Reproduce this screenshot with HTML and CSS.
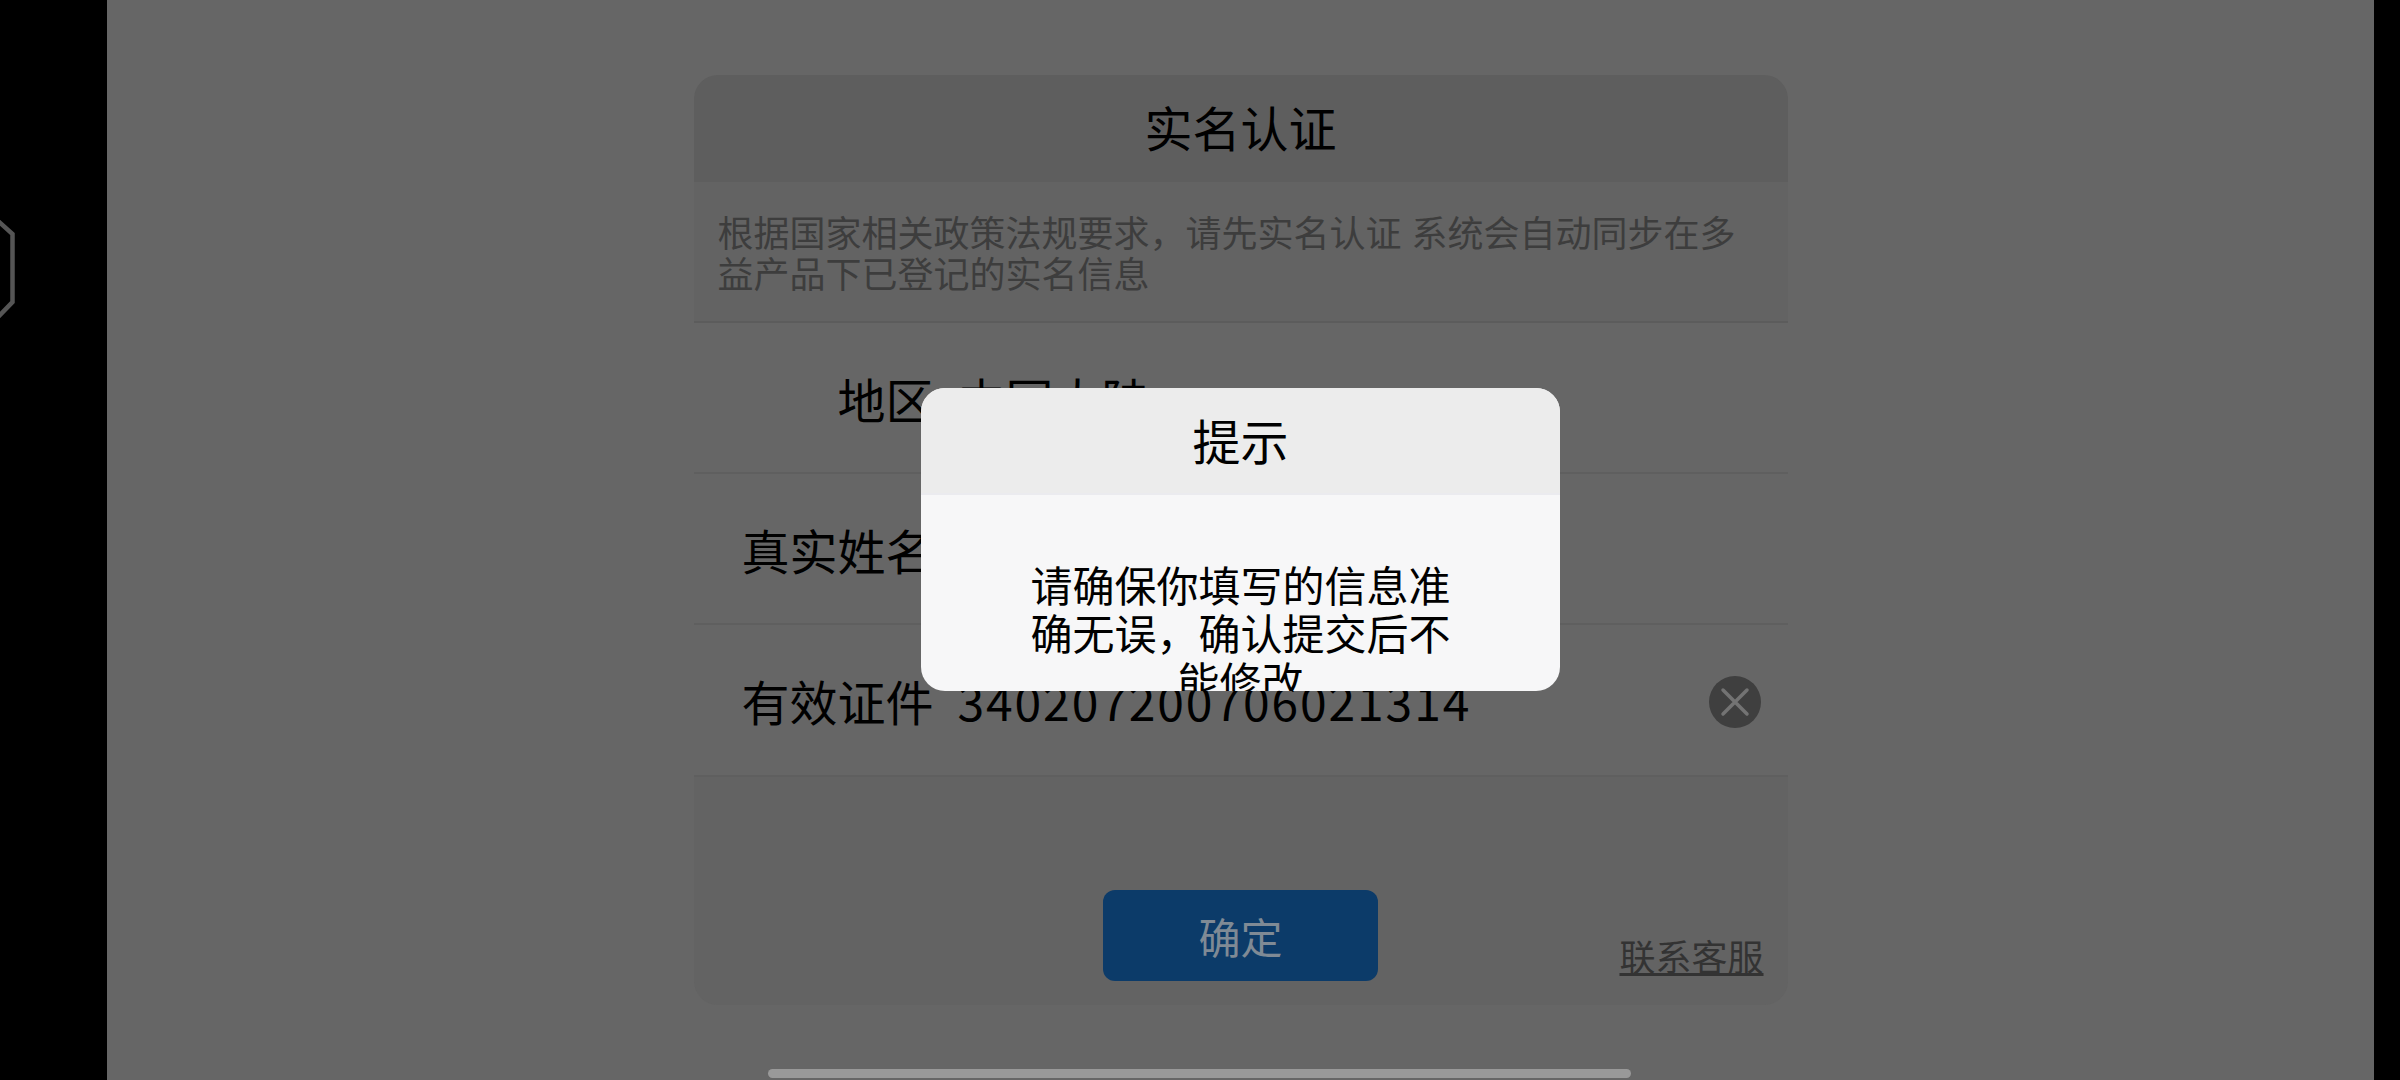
FILE: index.html
```html
<!DOCTYPE html>
<html>
    <head>
        <meta charset="utf-8" />
        <title>实名认证</title>
        <link rel="stylesheet" href="styles.css">
    </head>
    <body>
        <div class="screen">
            <div class="side_left">
                <svg class="side_handle" width="16" height="100" viewBox="0 0 16 100">
                    <path d="M-2 1 L12.5 14 V82 L-2 97" fill="none" stroke="#555" stroke-width="4.5"/>
                </svg>
            </div>
            <div class="stage">
                <div class="card">
                    <h3 class="card_title">实名认证</h3>
                    <p class="guide_txt">根据国家相关政策法规要求，请先实名认证 系统会自动同步在多益产品下已登记的实名信息</p>
                    <div class="row">
                        <span class="row_label">地区</span>
                        <span class="row_value">中国大陆</span>
                    </div>
                    <div class="row">
                        <span class="row_label">真实姓名</span>
                    </div>
                    <div class="row">
                        <span class="row_label">有效证件</span>
                        <span class="row_value id_num">340207200706021314</span>
                        <svg class="clear_btn" width="52" height="52" viewBox="0 0 52 52">
                            <circle cx="26" cy="26" r="26" fill="#3f3f3f"/>
                            <path d="M14 14 L38 38 M38 14 L14 38" stroke="#737373" stroke-width="3.5" stroke-linecap="round"/>
                        </svg>
                    </div>
                    <div class="card_footer">
                        <button type="button" class="submit_btn">确定</button>
                        <a class="service_link">联系客服</a>
                    </div>
                </div>
                <!-- dialog lies over the card -->
                <div class="dialogue_wrap">
                    <div class="dialogue_box">
                        <h4 class="dialogue_title">提示</h4>
                        <div class="dialogue_body">
                            <p class="dialogue_txt">请确保你填写的信息准确无误，确认提交后不能修改</p>
                        </div>
                    </div>
                </div>
            </div>
            <div class="side_right"></div>
            <div class="home_bar"></div>
        </div>
    </body>
</html>
```

FILE: styles.css
```css
* {
	padding: 0;
	margin: 0;
	box-sizing: border-box;
}
html, body {
	width: 100%;
	height: 100%;
	overflow: hidden;
}
body {
	font-family: "Noto Sans CJK SC", "Noto Sans", sans-serif;
	background: #000;
	color: #000;
}
.screen {
	display: flex;
	width: 2400px;
	height: 1080px;
	position: relative;
}
.side_left {
	width: 107px;
	background: #000;
	padding-top: 220px;
}
.side_handle {
	display: block;
}
.side_right {
	width: 26px;
	background: #000;
}
.stage {
	flex: 1;
	background: #666;
	position: relative;
	padding-top: 75px;
}
.card {
	width: 1094px;
	height: 930px;
	margin: 0 auto;
	display: flex;
	flex-direction: column;
	border-radius: 24px;
	overflow: hidden;
}
.card_title {
	flex: none;
	height: 107px;
	line-height: 103px;
	background: #5e5e5e;
	text-align: center;
	font-size: 48px;
	font-weight: 400;
}
.guide_txt {
	flex: none;
	height: 141px;
	padding: 29px 24px 0 24px;
	background: #636363;
	border-bottom: 2px solid #5c5c5c;
	font-size: 36px;
	line-height: 41px;
	word-spacing: 2px;
	color: #3d3d3d;
}
.row {
	flex: none;
	height: 151px;
	display: flex;
	align-items: center;
	padding: 0 27px 0 48px;
	border-bottom: 2px solid #5f5f5f;
	font-size: 48px;
}
.row:nth-of-type(3) {
	height: 152px;
}
.row_label {
	flex: none;
	width: 192px;
	text-align: right;
	margin-right: 24px;
	white-space: nowrap;
}
.id_num {
	letter-spacing: 1.9px;
}
.clear_btn {
	margin: 3px 0 0 auto;
}
.card_footer {
	flex: 1;
	min-height: 0;
	background: #636363;
	display: grid;
	grid-template-columns: 1fr 275px 1fr;
	align-items: start;
	padding: 113px 24px 24px 24px;
}
.submit_btn {
	grid-column: 2;
	height: 91px;
	border: 0;
	border-radius: 12px;
	background: #0c3b69;
	color: #7f8a95;
	font-family: inherit;
	font-size: 42px;
}
.service_link {
	grid-column: 3;
	justify-self: end;
	align-self: end;
	margin-bottom: 5px;
	font-size: 36px;
	line-height: 42px;
	color: #333;
	text-decoration: underline;
}
.dialogue_wrap {
	position: absolute;
	top: 0;
	left: 0;
	width: 100%;
	height: 100%;
	display: flex;
	align-items: center;
	justify-content: center;
}
.dialogue_box {
	width: 639px;
	height: 303px;
	margin-bottom: 1px;
	border-radius: 24px;
	overflow: hidden;
	background: #f7f7f8;
}
.dialogue_title {
	height: 107px;
	line-height: 103px;
	background: #ececec;
	border-bottom: 2px solid #ebebef;
	text-align: center;
	font-size: 48px;
	font-weight: 400;
}
.dialogue_body {
	padding-top: 65px;
}
.dialogue_txt {
	width: 440px;
	margin: 0 auto;
	text-align: center;
	font-size: 42px;
	line-height: 48px;
}
.home_bar {
	position: absolute;
	left: 768px;
	top: 1069px;
	width: 863px;
	height: 9px;
	border-radius: 5px;
	background: #999;
}
```
